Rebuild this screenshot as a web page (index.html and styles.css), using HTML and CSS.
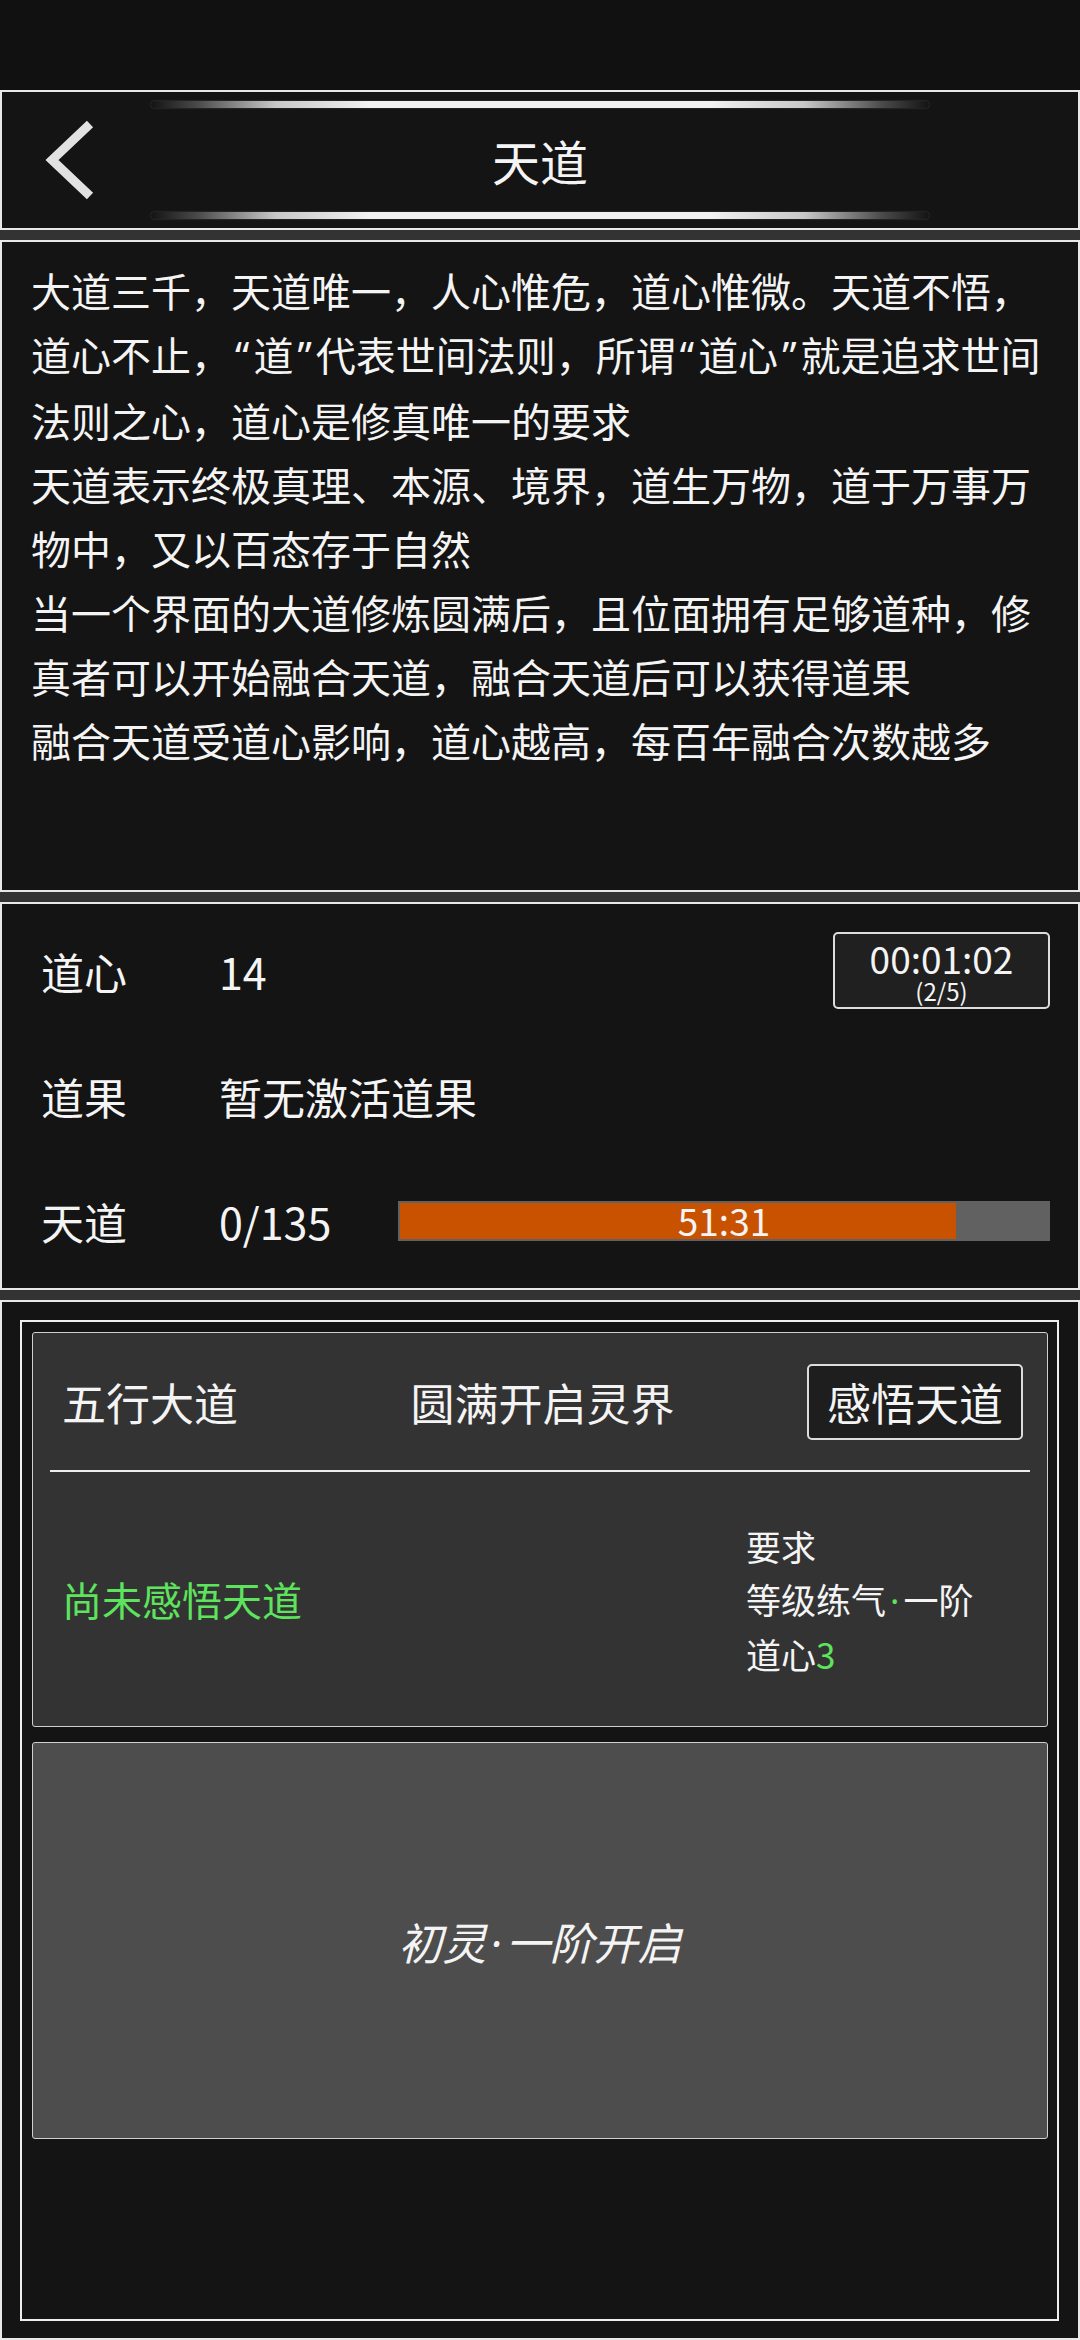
FILE: index.html
```html
<!DOCTYPE html>
<html lang="zh-CN">
<head>
    <meta charset="UTF-8">
    <meta name="viewport" content="width=device-width, initial-scale=1.0">
    <title>天道</title>
    <link rel="stylesheet" href="styles.css">
</head>
<body>
    <div class="status-bar"></div>

    <header class="panel topbar">
        <div class="glow-line"></div>
        <div class="title-row">
            <svg class="back" width="60" height="80" viewBox="0 0 60 80">
                <polyline points="50,4 12,40 50,76" fill="none" stroke="#e2e2e2" stroke-width="9" stroke-linejoin="miter"/>
            </svg>
            <h1>天道</h1>
            <span></span>
        </div>
        <div class="glow-line"></div>
    </header>

    <section class="panel desc">
        <p>大道三千，天道唯一，人心惟危，道心惟微。天道不悟，道心不止，<span class="punct">“</span>道<span class="punct">”</span>代表世间法则，所谓<span class="punct">“</span>道心<span class="punct">”</span>就是追求世间法则之心，道心是修真唯一的要求</p>
        <p>天道表示终极真理、本源、境界，道生万物，道于万事万物中，又以百态存于自然</p>
        <p>当一个界面的大道修炼圆满后，且位面拥有足够道种，修真者可以开始融合天道，融合天道后可以获得道果</p>
        <p>融合天道受道心影响，道心越高，每百年融合次数越多</p>
    </section>

    <section class="panel stats">
        <div class="stat-row">
            <span class="label">道心</span>
            <span class="value">14</span>
            <div class="timer">
                <span class="timer-time">00:01:02</span>
                <span class="timer-count">(2/5)</span>
            </div>
        </div>
        <div class="stat-row">
            <span class="label">道果</span>
            <span class="value wide">暂无激活道果</span>
        </div>
        <div class="stat-row">
            <span class="label">天道</span>
            <span class="value">0/135</span>
            <div class="bar">
                <div class="bar-fill" style="width: 85.8%"></div>
                <span class="bar-label">51:31</span>
            </div>
        </div>
    </section>

    <section class="panel main">
        <div class="frame">
            <div class="card dao-card">
                <div class="card-head">
                    <span class="dao-name">五行大道</span>
                    <span class="dao-goal">圆满开启灵界</span>
                    <button class="sense-btn">感悟天道</button>
                </div>
                <div class="divider"></div>
                <div class="card-body">
                    <span class="dao-state">尚未感悟天道</span>
                    <div class="require">
                        <div>要求</div>
                        <div>等级练气<span class="ok punct">·</span>一阶</div>
                        <div>道心<span class="ok">3</span></div>
                    </div>
                </div>
            </div>
            <div class="card locked-card">
                <span class="locked-text">初灵<span class="punct">·</span>一阶开启</span>
            </div>
        </div>
    </section>
</body>
</html>
```

FILE: styles.css
```css
* {
    margin: 0;
    padding: 0;
    box-sizing: border-box;
}

body {
    font-family: "Noto Sans CJK SC", "Noto Sans", sans-serif;
    background-color: #333333;
    color: #f4f4f4;
    height: 100vh;
    display: flex;
    flex-direction: column;
    gap: 10px;
    overflow: hidden;
}

.punct {
    font-family: "Noto Sans", sans-serif;
    padding: 0 4px;
}

.status-bar {
    height: 90px;
    flex-shrink: 0;
    background-color: #111111;
    margin-bottom: -10px;
}

.panel {
    background-color: #141414;
    border: 2px solid #e8e8e8;
    flex-shrink: 0;
}

/* header */

.topbar {
    height: 140px;
    display: flex;
    flex-direction: column;
    align-items: center;
    padding: 9px 0;
}

.glow-line {
    width: 778px;
    height: 7px;
    border-radius: 4px;
    background: linear-gradient(90deg, rgba(90, 90, 90, 0) 0%, #4a4a4a 6%, #c8c8c8 16%, #f2f2f2 28%, #f2f2f2 72%, #c8c8c8 84%, #4a4a4a 94%, rgba(90, 90, 90, 0) 100%);
    box-shadow: 0 0 2px rgba(255, 255, 255, 0.25);
}

.title-row {
    flex: 1;
    width: 100%;
    display: grid;
    grid-template-columns: 1fr auto 1fr;
    align-items: center;
}

.back {
    margin-left: 38px;
    display: block;
}

h1 {
    font-size: 48px;
    font-weight: 400;
    line-height: 1;
}

/* description */

.desc {
    height: 652px;
    padding: 16px 29px 0 29px;
    font-size: 40px;
    line-height: 64px;
}

/* stats */

.stats {
    height: 388px;
    padding: 4px 28px 0 39px;
}

.stat-row {
    height: 125px;
    display: grid;
    grid-template-columns: 178px 179px 1fr;
    align-items: center;
    font-size: 43px;
}

.value.wide {
    grid-column: 2 / -1;
}

.timer {
    justify-self: end;
    width: 217px;
    height: 77px;
    background-color: #202020;
    border: 2px solid #dddddd;
    border-radius: 5px;
    display: flex;
    flex-direction: column;
    align-items: center;
    justify-content: center;
}

.timer-time {
    font-size: 37px;
    line-height: 40px;
}

.timer-count {
    font-size: 24px;
    line-height: 26px;
}

.bar {
    position: relative;
    height: 40px;
    background-color: #616161;
    padding: 2px;
}

.bar-fill {
    height: 100%;
    background-color: #c85200;
}

.bar-label {
    position: absolute;
    inset: 0;
    display: flex;
    align-items: center;
    justify-content: center;
    font-size: 37px;
    line-height: 1;
}

/* main area */

.main {
    flex: 1;
    padding: 18px 19px 17px 18px;
    display: flex;
}

.frame {
    flex: 1;
    border: 2px solid #eeeeee;
    padding: 10px 9px 10px 10px;
    display: flex;
    flex-direction: column;
    gap: 15px;
}

.card {
    border: 1px solid #cfcfcf;
    border-radius: 3px;
}

.dao-card {
    height: 395px;
    background-color: #333333;
    display: flex;
    flex-direction: column;
}

.card-head {
    height: 137px;
    display: grid;
    grid-template-columns: 1fr auto 1fr;
    align-items: center;
    padding: 0 24px 0 29px;
    font-size: 44px;
}

.sense-btn {
    justify-self: end;
    width: 216px;
    height: 76px;
    background-color: #1e1e1e;
    border: 2px solid #dddddd;
    border-radius: 5px;
    color: #f4f4f4;
    font-family: inherit;
    font-size: 44px;
    line-height: 1;
}

.divider {
    height: 2px;
    margin: 0 17px;
    background-color: #eeeeee;
}

.card-body {
    flex: 1;
    display: grid;
    grid-template-columns: 1fr 301px;
    align-items: center;
    padding-left: 29px;
}

.dao-state {
    color: #5de35d;
    font-size: 40px;
}

.require {
    font-size: 35px;
    line-height: 53px;
}

.ok {
    color: #5de35d;
}

.locked-card {
    height: 397px;
    background-color: #4d4d4d;
    display: flex;
    align-items: center;
    justify-content: center;
}

.locked-text {
    font-size: 44px;
    font-style: italic;
}
```
